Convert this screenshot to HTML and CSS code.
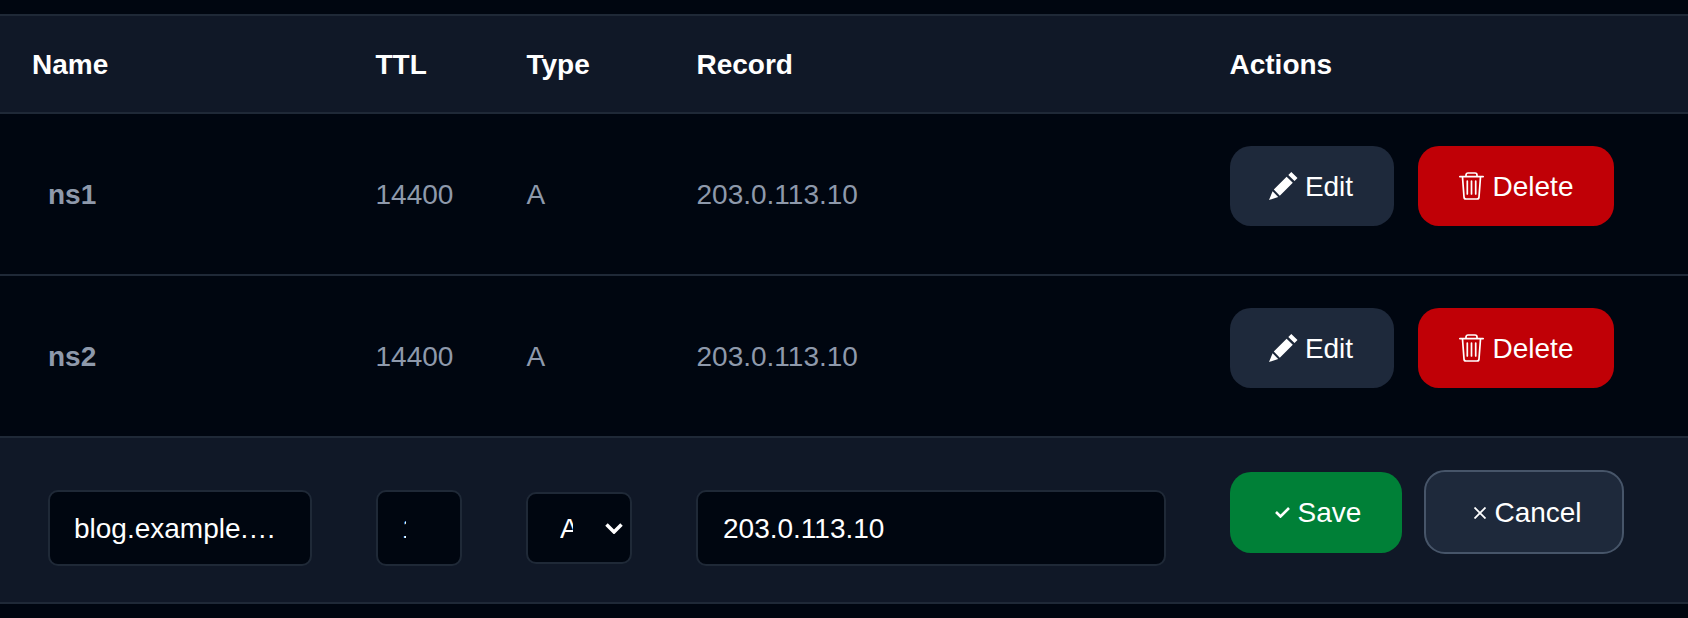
FILE: index.html
```html
<!DOCTYPE html>
<html lang="en">

<head>
    <meta charset="UTF-8">
    <title>DNS Records</title>
    <link rel="stylesheet" href="styles.css">
</head>

<body>
    <table class="records">
        <colgroup>
            <col class="col-name">
            <col class="col-ttl">
            <col class="col-type">
            <col class="col-record">
            <col class="col-actions">
        </colgroup>
        <thead>
            <tr>
                <th>Name</th>
                <th>TTL</th>
                <th>Type</th>
                <th>Record</th>
                <th>Actions</th>
            </tr>
        </thead>
        <tbody>
            <tr>
                <td class="name">ns1</td>
                <td>14400</td>
                <td>A</td>
                <td>203.0.113.10</td>
                <td class="actions">
                    <div class="btn-row">
                        <button class="btn btn-edit">
                            <svg class="icon-pencil" viewBox="0 0 29 28"><path fill="currentColor" d="M22.300 0L28.500 6L25.500 9L19.300 3ZM17.600 4.800L23.800 10.800L10.800 23.800L4.800 17.600ZM3.600 19.200L9.200 25L0 28Z"/></svg>
                            Edit
                        </button>
                        <button class="btn btn-delete">
                            <svg class="icon-trash" viewBox="0 0 25 28"><path fill="none" stroke="currentColor" stroke-width="1.700" stroke-linecap="round" stroke-linejoin="round" d="M.8 4.700H24.200M7 4.700V3a2 2 0 0 1 2-2h7a2 2 0 0 1 2 2V4.700M3.500 5L5 25a2 2 0 0 0 2 2h11a2 2 0 0 0 2-2L21.500 5M8.300 9V22M12.500 9V22M16.700 9V22"/></svg>
                            Delete
                        </button>
                    </div>
                </td>
            </tr>
            <tr>
                <td class="name">ns2</td>
                <td>14400</td>
                <td>A</td>
                <td>203.0.113.10</td>
                <td class="actions">
                    <div class="btn-row">
                        <button class="btn btn-edit">
                            <svg class="icon-pencil" viewBox="0 0 29 28"><path fill="currentColor" d="M22.300 0L28.500 6L25.500 9L19.300 3ZM17.600 4.800L23.800 10.800L10.800 23.800L4.800 17.600ZM3.600 19.200L9.200 25L0 28Z"/></svg>
                            Edit
                        </button>
                        <button class="btn btn-delete">
                            <svg class="icon-trash" viewBox="0 0 25 28"><path fill="none" stroke="currentColor" stroke-width="1.700" stroke-linecap="round" stroke-linejoin="round" d="M.8 4.700H24.200M7 4.700V3a2 2 0 0 1 2-2h7a2 2 0 0 1 2 2V4.700M3.500 5L5 25a2 2 0 0 0 2 2h11a2 2 0 0 0 2-2L21.500 5M8.300 9V22M12.500 9V22M16.700 9V22"/></svg>
                            Delete
                        </button>
                    </div>
                </td>
            </tr>
            <tr class="editing">
                <td class="field"><input class="input input-name" type="text" value="blog.example.com"></td>
                <td class="field"><input class="input input-ttl" type="number" value="14400"></td>
                <td class="field">
                    <select class="input input-type">
                        <option>A</option>
                        <option>AAAA</option>
                        <option>CNAME</option>
                    </select>
                </td>
                <td class="field"><input class="input input-record" type="text" value="203.0.113.10"></td>
                <td class="actions">
                    <div class="btn-row btn-row-edit">
                        <button class="btn btn-save">
                            <svg class="icon-check" viewBox="0 0 15 11"><path fill="none" stroke="currentColor" stroke-width="2.600" d="M1 5l4.500 4.500L14 1"/></svg>
                            Save
                        </button>
                        <button class="btn btn-cancel">
                            <svg class="icon-close" viewBox="0 0 12 12"><path fill="none" stroke="currentColor" stroke-width="1.800" d="M.5.5l11 11M11.500.5l-11 11"/></svg>
                            Cancel
                        </button>
                    </div>
                </td>
            </tr>
        </tbody>
    </table>
</body>

</html>
```

FILE: styles.css
```css
* {
    margin: 0;
    padding: 0;
    box-sizing: border-box;
}

body {
    font-family: 'Liberation Sans', Arial, sans-serif;
    background: #000610;
    color: #8e99ab;
    font-size: 28px;
    padding: 14px 0 13px;
}

.records {
    width: 100%;
    border-collapse: separate;
    border-spacing: 0;
    table-layout: fixed;
    border-top: 2px solid #1f2937;
}

.col-name { width: 375.5px; }
.col-ttl { width: 151px; }
.col-type { width: 170px; }
.col-record { width: 533px; }

th {
    background: #101827;
    color: white;
    font-weight: bold;
    text-align: left;
    height: 98px;
    padding-top: 2px;
    border-bottom: 2px solid #1f2937;
}

th:first-child {
    padding-left: 32px;
}

td {
    height: 162px;
    padding-top: 2px;
    border-bottom: 2px solid #1f2937;
    vertical-align: middle;
}

.name {
    padding-left: 48px;
    font-weight: bold;
}

.actions {
    vertical-align: top;
    padding-top: 32px;
}

.btn-row {
    display: flex;
    gap: 24px;
    margin-left: 0.5px;
}

.btn {
    display: flex;
    align-items: center;
    justify-content: center;
    gap: 8px;
    height: 80px;
    padding-top: 2px;
    border: none;
    border-radius: 21px;
    color: white;
    font: inherit;
    cursor: pointer;
}

.btn-edit {
    width: 164px;
    gap: 7px;
    padding-right: 2px;
    background: #1e293b;
}

.btn-delete {
    width: 196px;
    gap: 9px;
    background: #c00006;
}

.icon-pencil {
    width: 29px;
    height: 28px;
    margin-top: -2px;
}

.icon-trash {
    width: 25px;
    height: 28px;
    margin-top: -2px;
}

.icon-check {
    width: 15px;
    height: 11px;
}

.icon-close {
    width: 12px;
    height: 12px;
}

.editing td {
    background: #101827;
    height: 166px;
}

.editing .field {
    padding-top: 15px;
}

.editing .actions {
    padding-top: 32px;
}

.btn-row-edit {
    gap: 22px;
    align-items: center;
}

.btn-save {
    width: 172px;
    height: 81px;
    padding-top: 1px;
    padding-left: 4px;
    background: #008037;
}

.btn-cancel {
    width: 200px;
    height: 84px;
    padding-top: 1px;
    padding-left: 8px;
    background: #1e293b;
    border: 2px solid #475569;
}

.input {
    display: block;
    height: 76px;
    padding: 2px 24px 0;
    background: #000610;
    border: 2px solid #1f2937;
    border-radius: 10px;
    color: white;
    font: inherit;
}

.input-name {
    width: 264px;
    margin-left: 48px;
    text-overflow: ellipsis;
}

.input-ttl {
    width: 86px;
    margin-left: 0.5px;
    padding-right: 39px;
}

.input-type {
    width: 106px;
    height: 72px;
    margin-left: -0.5px;
    padding: 2px 57px 0 32px;
    appearance: none;
    background-image: url("data:image/svg+xml,%3Csvg xmlns='http://www.w3.org/2000/svg' viewBox='0 0 18 11'%3E%3Cpath fill='none' stroke='white' stroke-width='3.500' d='M1.500 1.500L9 9L16.500 1.500'/%3E%3C/svg%3E");
    background-repeat: no-repeat;
    background-size: 18px 11px;
    background-position: right 7px top 29px;
}

.input-record {
    width: 470px;
    margin-left: -0.5px;
    padding-left: 25px;
}
```
